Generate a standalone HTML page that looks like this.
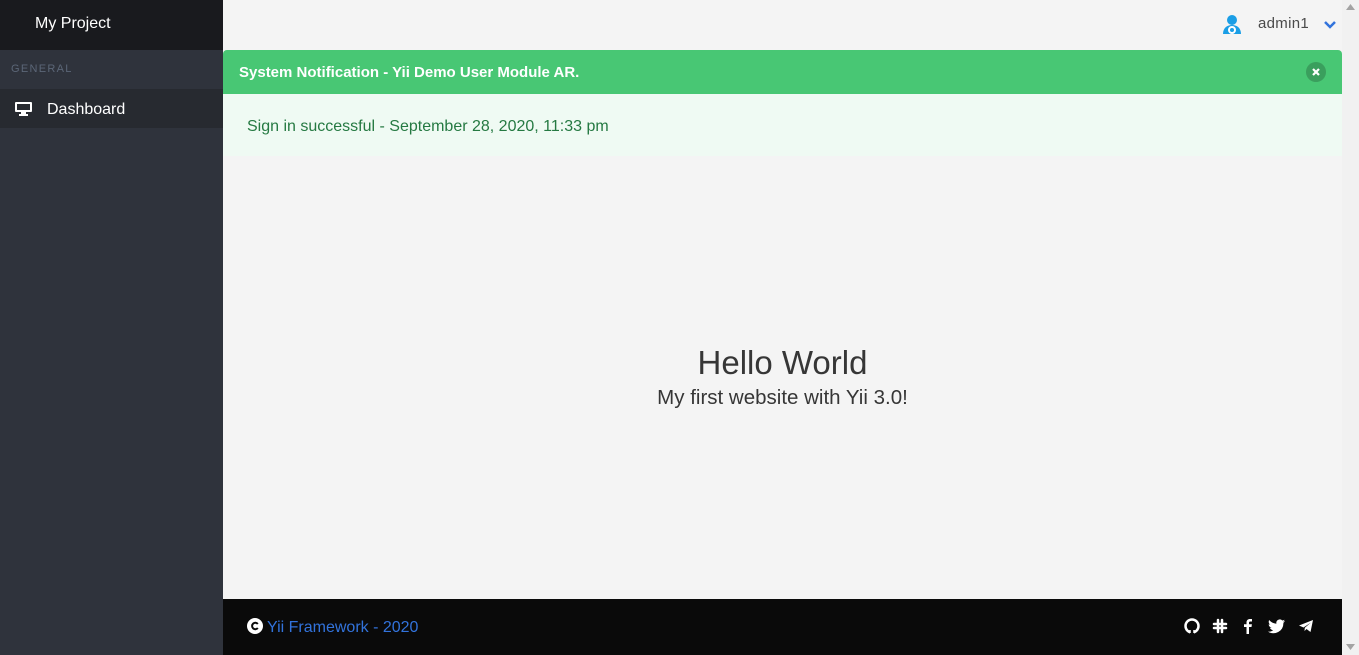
<!DOCTYPE html>
<html><head><meta charset="utf-8"><style>
*{margin:0;padding:0;box-sizing:border-box}
body{width:1359px;height:655px;overflow:hidden;background:#f4f4f4;font-family:"Liberation Sans",sans-serif;position:relative}
.side{position:absolute;left:0;top:0;width:223px;height:655px;background:#2f333c}
.brand{height:50px;background:#191a1e;color:#fff;font-size:16px;padding:15px 0 0 35px}
.gen{height:39px;color:#5b6677;font-size:11px;letter-spacing:1.3px;padding:13px 0 0 11px}
.dash{height:39px;background:#272a30;color:#fff;font-size:16px;padding:12px 0 0 47px;position:relative}
.dash svg{position:absolute;left:15px;top:13px}
.top{position:absolute;left:223px;top:0;width:1119px;height:50px}
.notif{position:absolute;left:223px;top:50px;width:1119px;height:44px;background:#48c774;border-radius:4px 4px 0 0;color:#fff;font-weight:bold;font-size:15px;padding:14px 0 0 16px}
.close{position:absolute;right:16px;top:12px;width:20px;height:20px;border-radius:50%;background:#3a9f5d}
.msg{position:absolute;left:223px;top:94px;width:1119px;height:62px;background:#effaf3;color:#257942;font-size:16px;padding:24px 0 0 24px}
.hero{position:absolute;left:223px;top:343px;width:1119px;text-align:center;color:#363636}
.hero h1{font-weight:normal;font-size:33px;line-height:40px}
.hero p{font-size:20.5px;line-height:24px;margin-top:3px}
.foot{position:absolute;left:223px;top:599px;width:1119px;height:56px;background:#0a0a0a}
.foot .c{position:absolute;left:24px;top:19px;color:#3273dc;font-size:16px}
.icons{position:absolute;right:28px;top:19px;display:flex;gap:12px}
.sb{position:absolute;left:1342px;top:0;width:17px;height:655px;background:#f1f1f1}
</style></head><body>
<div class="side">
<div class="brand">My Project</div>
<div class="gen">GENERAL</div>
<div class="dash"><svg width="17" height="14" viewBox="0 0 17 14"><rect x="0" y="0" width="17" height="10" rx="1" fill="#fff"/><rect x="2" y="2" width="13" height="6" fill="#272a30"/><rect x="6" y="10" width="5" height="2" fill="#fff"/><rect x="4" y="12" width="9" height="2" fill="#fff"/></svg>Dashboard</div>
</div>
<div class="top">
<svg style="position:absolute;left:998px;top:14px" width="22" height="22" viewBox="0 0 22 22"><circle cx="11" cy="6" r="5" fill="#1a9ee6"/><path d="M2 20c0-6 4-9 9-9s9 3 9 9z" fill="#1a9ee6"/><circle cx="11" cy="16" r="4" fill="#fff"/><circle cx="11" cy="16" r="2" fill="#1a9ee6"/></svg>
<span style="position:absolute;left:1035px;top:15px;font-size:15px;color:#4a4a4a;letter-spacing:0.3px">admin1</span>
<svg style="position:absolute;left:1100px;top:20px" width="14" height="10" viewBox="0 0 14 10"><path d="M2 2l5 5 5-5" stroke="#3273dc" stroke-width="2.5" fill="none"/></svg>
</div>
<div class="notif">System Notification - Yii Demo User Module AR.<div class="close"><svg width="20" height="20" viewBox="0 0 20 20"><path d="M7 7l6 6M13 7l-6 6" stroke="#fff" stroke-width="2.2"/></svg></div></div>
<div class="msg">Sign in successful - September 28, 2020, 11:33 pm</div>
<div class="hero"><h1>Hello World</h1><p>My first website with Yii 3.0!</p></div>
<div class="foot">
<div class="c"><svg width="16" height="16" viewBox="0 0 16 16" style="vertical-align:-2px;margin-right:4px"><circle cx="8" cy="8" r="8" fill="#fff"/><path d="M10.8 6A3.2 3.2 0 1 0 10.8 10" stroke="#0a0a0a" stroke-width="2" fill="none"/></svg>Yii Framework - 2020</div>
<div class="icons">
<svg width="16" height="16" viewBox="0 0 16 16"><circle cx="8" cy="8" r="6.5" stroke="#fff" stroke-width="2.5" fill="none"/><rect x="6" y="10" width="4" height="6" fill="#0a0a0a"/><path d="M6 15v-3M10 15v-3" stroke="#fff" stroke-width="1.5"/></svg>
<svg width="16" height="16" viewBox="0 0 16 16"><path d="M6 2v12M10 2v12M2 6h12M2 10h12" stroke="#fff" stroke-width="2.5" stroke-linecap="round"/></svg>
<svg width="16" height="16" viewBox="0 0 16 16"><path d="M9 16V9h2.5l.4-2.7H9V4.8c0-.8.3-1.3 1.4-1.3H12V1.1C11.6 1 10.8 1 10 1 8 1 6.5 2.2 6.5 4.4v1.9H4V9h2.5v7z" fill="#fff"/></svg>
<svg width="18" height="16" viewBox="0 0 18 16"><path d="M17 3c-.6.3-1.3.5-2 .6.7-.4 1.3-1.1 1.5-1.9-.7.4-1.4.7-2.2.8A3.5 3.5 0 0 0 8.4 5.7 10 10 0 0 1 1.2 2a3.5 3.5 0 0 0 1.1 4.7c-.6 0-1.1-.2-1.6-.4 0 1.700 1.2 3.1 2.8 3.4-.5.2-1.1.2-1.6.1.5 1.4 1.8 2.4 3.3 2.4A7 7 0 0 1 0 13.6 10 10 0 0 0 15.4 5.2V4.8c.6-.5 1.2-1.1 1.6-1.8z" fill="#fff"/></svg>
<svg width="16" height="16" viewBox="0 0 16 16"><path d="M1 7.5 15 2l-2.5 12-4-3-2 2 .3-3.2L13 4.5 5.5 9.5z" fill="#fff"/></svg>
</div></div>
<div class="sb"><svg style="position:absolute;left:4px;top:4px" width="9" height="6"><path d="M0 6L4.5 0 9 6z" fill="#a3a3a3"/></svg><svg style="position:absolute;left:4px;top:644px" width="9" height="6"><path d="M0 0h9L4.5 6z" fill="#a3a3a3"/></svg></div>
</body></html>
